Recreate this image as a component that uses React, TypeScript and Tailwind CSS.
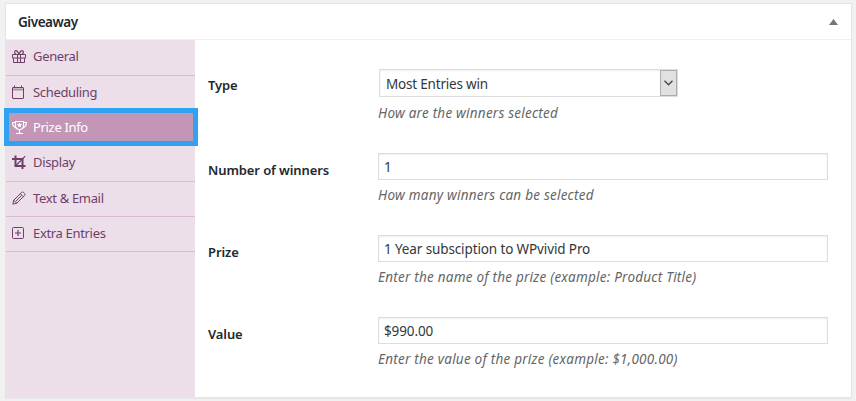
import React, { useState } from "react";
import clsx from "clsx";

const GiftIcon = () => (
  <svg width="16" height="16" viewBox="0 0 16 16" fill="none" stroke="currentColor">
    <path d="M0.500 5.500h13v3.500h-13zM1.500 9v4.500h11v-4.500M5.500 5.500v8M8.500 5.500v8" />
    <path d="M7 5.300C6 1.800 3.200 0.500 2.600 2.800c-.3 1.300.4 2 1.500 2.500M7 5.300C8 1.800 10.800 0.500 11.400 2.800c.3 1.300-.4 2-1.500 2.500" strokeWidth="1.200" />
  </svg>
);

const CalendarIcon = () => (
  <svg width="16" height="16" viewBox="0 0 16 16" fill="none" stroke="currentColor">
    <rect x="0.500" y="2.500" width="11" height="11" rx="0.500" />
    <path d="M1 4.500h10" strokeWidth="2" opacity="0.500" />
    <path d="M2.500 0.500v2M9.500 0.500v2" />
  </svg>
);

const TrophyIcon = () => (
  <svg width="16" height="16" viewBox="0 0 16 16" fill="none" stroke="currentColor" strokeWidth="1.200">
    <path d="M3.500 1.500h8v4.500c0 2-1.700 3.500-4 3.500s-4-1.500-4-3.500z" />
    <path d="M3.500 2.500h-3c0 3 1.200 4.500 4 5.500M11.500 2.500h3c0 3-1.200 4.500-4 5.500M7.500 9.500v3.500M4 13.500h7" />
    <path
      d="M7.500 2.500l.9 1.500 1.600.3-1.200 1.200.3 1.700-1.600-.7-1.600.7.3-1.700-1.200-1.200 1.600-.3z"
      fill="currentColor"
      stroke="none"
    />
  </svg>
);

const CropIcon = () => (
  <svg width="16" height="16" viewBox="0 0 16 16" fill="none" stroke="currentColor">
    <path d="M3.500 0.500v10.500h10M0 4h10.500v10" strokeWidth="2" />
    <path d="M3.500 11L13.200 1.200" strokeWidth="1.200" />
  </svg>
);

const PencilIcon = () => (
  <svg width="16" height="16" viewBox="0 0 16 16" fill="none" stroke="currentColor">
    <path d="M0.800 13.200l1-4L9.700 1.300c.5-.5 1.100-.5 1.600 0l1.400 1.400c.5.5.5 1.100 0 1.600l-7.900 7.900zM1.800 9.200l3 3M8.300 2.700l3 3M3.800 10.200l5.800-5.800" />
  </svg>
);

const PlusIcon = () => (
  <svg width="16" height="16" viewBox="0 0 16 16" fill="none" stroke="currentColor">
    <rect x="0.500" y="1.500" width="11" height="11" rx="1" />
    <path d="M3 7h6M6 4v6" strokeWidth="1.200" />
  </svg>
);

const tabs = [
  { name: "General", icon: GiftIcon, className: "h-9 pb-px" },
  { name: "Scheduling", icon: CalendarIcon, className: "h-[35px]" },
  { name: "Prize Info", icon: TrophyIcon, className: "h-[35px]" },
  { name: "Display", icon: CropIcon, className: "h-9 pb-px" },
  { name: "Text & Email", icon: PencilIcon, className: "h-[35px]" },
  { name: "Extra Entries", icon: PlusIcon, className: "h-[35px]" },
];

const inputClass =
  "block h-[27px] w-[450px] border border-[#ddd] bg-white px-[5px] text-[13.5px] tracking-[-0.12px] text-[#32373c] shadow-[inset_0_1px_2px_rgba(0,0,0,0.07)] outline-none";

const Field = ({
  label,
  description,
  className,
  children,
}: {
  label: string;
  description: string;
  className?: string;
  children: React.ReactNode;
}) => (
  <div className={clsx("group flex", className)}>
    <label className="w-[170px] shrink-0 pt-[7px] text-[13px] leading-5 font-semibold tracking-[-0.1px] text-[#23282d] group-first:pt-1.5">
      {label}
    </label>
    <div>
      {children}
      <p className="mt-[5px] text-[13.5px] leading-5 tracking-[0.23px] whitespace-nowrap text-[#666] italic group-first:mt-1.5">
        {description}
      </p>
    </div>
  </div>
);

const App = () => {
  const [active, setActive] = useState("Prize Info");
  const [winners, setWinners] = useState("1");
  const [prize, setPrize] = useState("1 Year subsciption to WPvivid Pro");
  const [value, setValue] = useState("$990.00");

  return (
    <div className="h-[401px] w-[856px] bg-[#f1f1f1] pt-[3px] pl-[5px] font-['Noto_Sans','Open_Sans',sans-serif]">
      <div className="flex h-[395px] w-[847px] flex-col border border-[#e5e5e5] bg-white shadow-[0_1px_1px_rgba(0,0,0,0.04)]">
        <div className="flex h-9 shrink-0 items-center justify-between border-b border-[#eee] pr-[13px] pl-3">
          <h2 className="pt-0.5 text-[13.5px] font-semibold tracking-[-0.45px] text-[#23282d]">Giveaway</h2>
          <svg width="9" height="6" viewBox="0 0 9 6" className="mt-px fill-[#72777c]">
            <path d="M4.500 0L9 6H0z" />
          </svg>
        </div>
        <div className="flex flex-1">
          <nav className="w-[189px] shrink-0 bg-[#ecdfe9]">
            {tabs.map(({ name, icon: Icon, className }) => (
              <button
                key={name}
                onClick={() => setActive(name)}
                className={clsx(
                  "relative flex w-full items-center border-b border-[#d9bcd3] pl-1.5 text-[13px] tracking-[-0.33px]",
                  className,
                  active === name ? "z-10 bg-[#c396b8] text-white" : "text-[#6f3f68]"
                )}
              >
                <Icon />
                <span className="ml-[5px] whitespace-nowrap">{name}</span>
                {active === name && (
                  <span className="absolute -top-[3px] -right-[3px] -bottom-px -left-0.5 border-5 border-[#2ea3f2]" />
                )}
              </button>
            ))}
          </nav>
          <div className="flex flex-col pt-[29px] pl-[13px]">
            <Field label="Type" description="How are the winners selected" className="h-[84px]">
              <div className="ml-px flex h-7 w-[299px] items-center justify-between border border-[#ddd] pl-1.5 text-[13.5px] text-[#32373c] shadow-[inset_0_1px_2px_rgba(0,0,0,0.07)]">
                <span className="pt-0.5 tracking-[-0.2px]">Most Entries win</span>
                <span className="flex h-[26px] w-[17px] items-center justify-center border border-[#adadad] bg-[#e1e1e1]">
                  <svg width="9" height="6" viewBox="0 0 9 6" fill="none" stroke="#444" strokeWidth="1.300">
                    <path d="M0.500 0.800l4 4 4-4" />
                  </svg>
                </span>
              </div>
            </Field>
            <Field label="Number of winners" description="How many winners can be selected" className="h-[82px]">
              <input className={inputClass} value={winners} onChange={(e) => setWinners(e.target.value)} />
            </Field>
            <Field label="Prize" description="Enter the name of the prize (example: Product Title)" className="h-[82px]">
              <input className={inputClass} value={prize} onChange={(e) => setPrize(e.target.value)} />
            </Field>
            <Field label="Value" description="Enter the value of the prize (example: $1,000.00)">
              <input className={inputClass} value={value} onChange={(e) => setValue(e.target.value)} />
            </Field>
          </div>
        </div>
      </div>
    </div>
  );
};

export default App;
